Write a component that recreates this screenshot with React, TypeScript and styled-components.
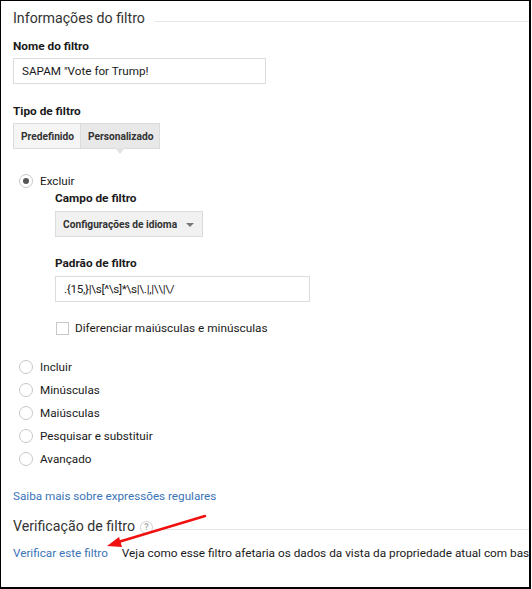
import React from "react";
import styled, { createGlobalStyle } from "styled-components";

const Global = createGlobalStyle`
  html, body { margin: 0; padding: 0; background: #fff; }
  body { font-family: Roboto, "Liberation Sans", Arial, sans-serif; color: #222; }
  * { box-sizing: border-box; }
`;

const Frame = styled.div`
  position: relative;
  width: 531px;
  height: 589px;
  border-top: 1px solid #000;
  border-left: 1px solid #000;
  border-right: 2px solid #000;
  border-bottom: 2px solid #000;
  padding: 7px 0 0 12px;
  overflow: hidden;
`;

const SectionTitle = styled.div<{ $top?: number }>`
  display: flex;
  align-items: center;
  margin-top: ${(p) => p.$top ?? 0}px;
  font-size: 14.2px;
  line-height: 20px;
  color: #333;
  white-space: nowrap;
`;

const TitleRule = styled.div`
  flex: 1;
  height: 1px;
  background: #e5e5e5;
  margin-top: 6px;
  margin-left: 10px;
`;

const Label = styled.div<{ $top: number }>`
  margin-top: ${(p) => p.$top}px;
  font-size: 11.8px;
  font-weight: 700;
  line-height: 16px;
  color: #1a1a1a;
`;

const TextInput = styled.div<{ $top: number; $width: number; $tight?: boolean }>`
  margin-top: ${(p) => p.$top}px;
  width: ${(p) => p.$width}px;
  height: 26px;
  border: 1px solid #dcdcdc;
  padding: 0 8px;
  display: flex;
  align-items: center;
  font-size: 11.7px;
  letter-spacing: ${(p) => (p.$tight ? "-0.3px" : "0")};
  color: #1a1a1a;
  white-space: nowrap;
`;

const Tabs = styled.div`
  margin-top: 4px;
  display: flex;
`;

const Tab = styled.div<{ $active?: boolean }>`
  position: relative;
  height: 26px;
  padding: 0 6px 0 7px;
  display: flex;
  align-items: center;
  font-size: 10.2px;
  font-weight: 700;
  color: #333;
  background: ${(p) => (p.$active ? "#e8e8e8" : "#f5f5f5")};
  border: 1px solid #dcdcdc;
  margin-left: ${(p) => (p.$active ? "-1px" : "0")};
  ${(p) =>
    p.$active &&
    `
    &::after {
      content: "";
      position: absolute;
      left: 50%;
      top: 100%;
      margin-left: -5px;
      border-left: 5px solid transparent;
      border-right: 5px solid transparent;
      border-top: 6px solid #e2e2e2;
    }
  `}
`;

const RadioRow = styled.div<{ $top: number }>`
  margin-top: ${(p) => p.$top}px;
  margin-left: 6px;
  display: flex;
  align-items: center;
  gap: 7px;
  font-size: 11.7px;
  line-height: 16px;
  color: #1a1a1a;
`;

const RadioCircle = styled.span<{ $checked?: boolean }>`
  width: 14px;
  height: 14px;
  border-radius: 50%;
  border: 1px solid #c8c8c8;
  background: #fff;
  display: flex;
  align-items: center;
  justify-content: center;
  &::after {
    content: "";
    display: ${(p) => (p.$checked ? "block" : "none")};
    width: 6px;
    height: 6px;
    border-radius: 50%;
    background: #555;
  }
`;

const Indented = styled.div`
  margin-left: 42px;
`;

const Dropdown = styled.div`
  margin-top: 5px;
  width: 148px;
  height: 26px;
  background: #f1f1f1;
  border: 1px solid #dcdcdc;
  display: flex;
  align-items: center;
  justify-content: space-between;
  padding: 0 7px 0 7px;
  font-size: 10.2px;
  font-weight: 700;
  color: #333;
  white-space: nowrap;
`;

const Caret = styled.span`
  width: 0;
  height: 0;
  border-left: 4px solid transparent;
  border-right: 4px solid transparent;
  border-top: 4px solid #777;
  margin-right: 1px;
  margin-top: 2px;
`;

const CheckRow = styled.div`
  margin-top: 18px;
  margin-left: 1px;
  display: flex;
  align-items: center;
  gap: 6px;
  font-size: 11.8px;
  line-height: 16px;
  color: #1a1a1a;
`;

const CheckBox = styled.span`
  width: 13px;
  height: 13px;
  border: 1px solid #c8c8c8;
  background: #fff;
`;

const Link = styled.a<{ $top: number }>`
  display: block;
  margin-top: ${(p) => p.$top}px;
  font-size: 11.7px;
  line-height: 16px;
  color: #3a74b8;
  text-decoration: none;
  white-space: nowrap;
`;

const HelpIcon = styled.span`
  width: 13px;
  height: 13px;
  margin-left: 5px;
  margin-top: 3px;
  border-radius: 50%;
  border: 1px solid #d0d0d0;
  color: #b0b0b0;
  font-size: 9px;
  line-height: 11px;
  text-align: center;
  font-weight: 700;
`;

const VerifyRow = styled.div`
  margin-top: 9px;
  display: flex;
  align-items: center;
  gap: 14px;
  font-size: 11.7px;
  line-height: 16px;
  white-space: nowrap;
  color: #1a1a1a;
`;

const InlineLink = styled.a`
  color: #3a74b8;
  text-decoration: none;
`;

const Description = styled.span`
  font-size: 11.8px;
  color: #1a1a1a;
`;

const Arrow = styled.svg`
  position: absolute;
  left: 0;
  top: 0;
  pointer-events: none;
`;

const options = ["Incluir", "Minúsculas", "Maiúsculas", "Pesquisar e substituir", "Avançado"];

export default function App() {
  return (
    <>
      <Global />
      <Frame>
        <SectionTitle>
          Informações do filtro
          <TitleRule />
        </SectionTitle>
        <Label $top={10}>Nome do filtro</Label>
        <TextInput $top={4} $width={253}>SAPAM "Vote for Trump!</TextInput>
        <Label $top={19}>Tipo de filtro</Label>
        <Tabs>
          <Tab>Predefinido</Tab>
          <Tab $active>Personalizado</Tab>
        </Tabs>
        <RadioRow $top={24}>
          <RadioCircle $checked />
          Excluir
        </RadioRow>
        <Indented>
          <Label $top={1}>Campo de filtro</Label>
          <Dropdown>
            Configurações de idioma
            <Caret />
          </Dropdown>
          <Label $top={18}>Padrão de filtro</Label>
          <TextInput $top={5} $width={255} $tight>{".{15,}|\\s[^\\s]*\\s|\\.|,|\\\\|\\/"}</TextInput>
          <CheckRow>
            <CheckBox />
            Diferenciar maiúsculas e minúsculas
          </CheckRow>
        </Indented>
        {options.map((o, i) => (
          <RadioRow key={o} $top={i === 0 ? 23 : 7}>
            <RadioCircle />
            {o}
          </RadioRow>
        ))}
        <Link $top={21} href="#">Saiba mais sobre expressões regulares</Link>
        <SectionTitle $top={12}>
          Verificação de filtro
          <HelpIcon>?</HelpIcon>
          <TitleRule />
        </SectionTitle>
        <VerifyRow>
          <InlineLink href="#">Verificar este filtro</InlineLink>
          <Description>Veja como esse filtro afetaria os dados da vista da propriedade atual com base nos últimos sete dias de tráfego.</Description>
        </VerifyRow>
        <Arrow width="531" height="589" viewBox="0 0 531 589">
          <line x1="204" y1="515" x2="114" y2="542" stroke="#f01010" strokeWidth="2.5" strokeLinecap="round" />
          <polygon points="106,545 118,536 121,546" fill="#f01010" />
        </Arrow>
      </Frame>
    </>
  );
}
